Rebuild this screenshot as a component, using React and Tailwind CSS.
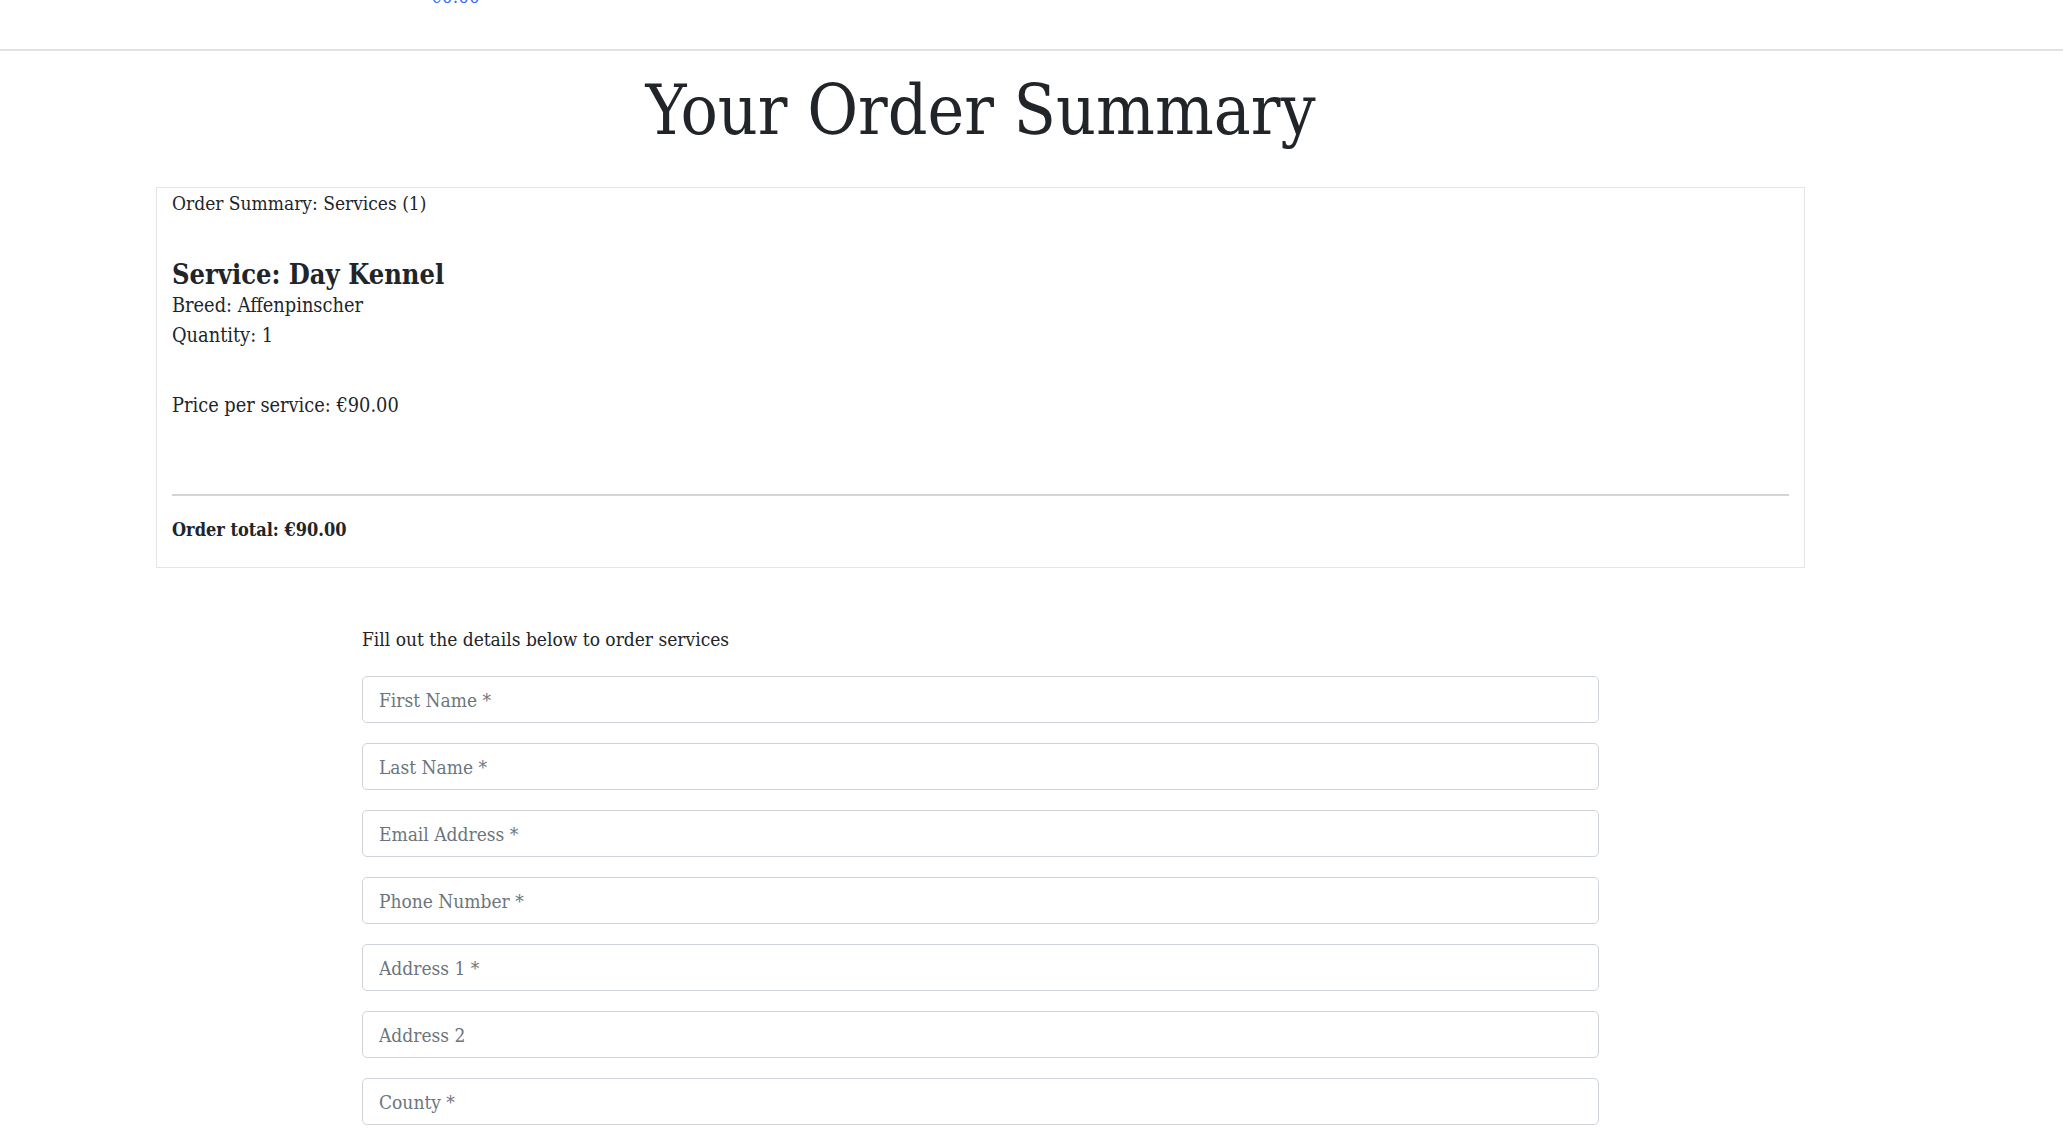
import React from 'react'

const fields = [
    'First Name *',
    'Last Name *',
    'Email Address *',
    'Phone Number *',
    'Address 1 *',
    'Address 2',
    'County *',
    'Town or City *',
    'Postcode',
]

export default function App() {
    return (
        <div className="min-h-screen overflow-hidden bg-white text-[#212529] font-['DejaVu_Serif_Condensed','DejaVu_Serif',serif]">

            {/* top bar, scrolled so only the bottom shows */}
            <header className="h-[51px] border-b-2 border-[#dee2e6] overflow-hidden">
                <div className="pl-[431px] -mt-[11px] text-[#3b6cf6] text-[19px] leading-[15px]">€0.00</div>
            </header>

            <main className="pl-[156px] pr-[258px]">
                <h1 className="text-center text-[69px] leading-none mt-[25px] mb-[42px]">Your Order Summary</h1>

                {/* summary box */}
                <div className="border border-[#e5e5e5] px-[15px] pt-[3px] pb-[23px]">
                    <p className="text-[19px] leading-[24px]">Order Summary: Services (1)</p>
                    <h3 className="mt-[44px] text-[27px] font-bold leading-[32px]">Service: Day Kennel</h3>
                    <p className="text-[19.8px] leading-[30px]">Breed: Affenpinscher</p>
                    <p className="text-[19.8px] leading-[30px]">Quantity: 1</p>
                    <p className="mt-[40px] text-[19.8px] leading-[30px]">Price per service: €90.00</p>
                    <hr className="mt-[73px] border-t-2 border-[#d4d4d4]" />
                    <p className="mt-[20px] text-[18px] font-bold leading-[28px]">Order total: €90.00</p>
                </div>

                {/* details form */}
                <div className="w-[1237px] mx-auto mt-[56px]">
                    <p className="text-[19px] leading-[30px] mb-[22px]">Fill out the details below to order services</p>
                    <form className="flex flex-col gap-[20px]">
                        {fields.map(f => (
                            <input
                                key={f}
                                type="text"
                                placeholder={f}
                                className="h-[47px] w-full rounded-[5px] border border-[#ced4da] px-[16px] text-[19px] text-[#495057] placeholder-[#6c757d] outline-none"
                            />
                        ))}
                    </form>
                </div>
            </main>
        </div>
    )
}
